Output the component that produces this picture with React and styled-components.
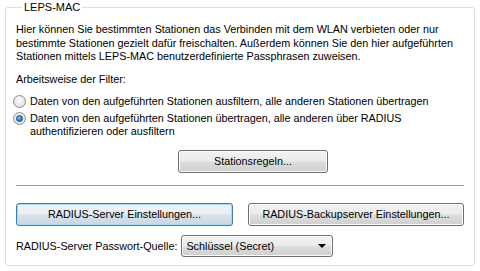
import React, { useState } from 'react';
import styled, { createGlobalStyle } from 'styled-components';

const GlobalStyle = createGlobalStyle`
  html, body {
    margin: 0;
    padding: 0;
    background: #ffffff;
  }
  body {
    font-family: "Liberation Sans", Arial, sans-serif;
    font-size: 10.8px;
    color: #000000;
  }
`;

const Page = styled.div`
  width: 480px;
  height: 271px;
  padding: 0 6px 0 5px;
  box-sizing: border-box;
  background: #ffffff;
`;

const GroupBox = styled.fieldset`
  margin: 0;
  padding: 0 10px 10px 10px;
  height: 266px;
  box-sizing: border-box;
  border: 1px solid #d5dfe5;
  border-radius: 3px;
`;

const Legend = styled.legend`
  margin-left: 6px;
  padding: 0 2px;
  font-size: 11px;
  line-height: 14px;
`;

const Intro = styled.p`
  margin: 9px 0 0 0;
  line-height: 13.5px;
`;

const Caption = styled.div`
  margin-top: 9px;
  line-height: 13px;
`;

const RadioList = styled.div`
  display: flex;
  flex-direction: column;
  gap: 4px;
  margin-top: 9px;
`;

const RadioRow = styled.label`
  display: flex;
  align-items: flex-start;
  gap: 4px;
  margin-left: -3px;
  line-height: 13px;
`;

const RadioDot = styled.span`
  flex: none;
  width: 11px;
  height: 11px;
  margin-top: 0;
  border-radius: 50%;
  border: 1px solid #8d8d8d;
  background: radial-gradient(circle at 50% 40%, #fbfbfb 0%, #e8e8e8 55%, #d4d4d4 100%);
  display: flex;
  align-items: center;
  justify-content: center;

  &::after {
    content: '';
    display: ${(p) => (p.checked ? 'block' : 'none')};
    width: 5px;
    height: 5px;
    border-radius: 50%;
    border: 1px solid #174c86;
    background: radial-gradient(circle at 40% 35%, #8ad0ff 0%, #2a86d6 50%, #0d4f9a 100%);
  }
`;

const RadioText = styled.span`
  display: block;
`;

const ButtonRow = styled.div`
  display: flex;
  justify-content: ${(p) => p.justify || 'flex-start'};
  gap: 15px;
  margin-top: ${(p) => p.top || 0}px;
  padding-left: ${(p) => p.indent || 0}px;
`;

const Button = styled.button`
  width: ${(p) => p.w}px;
  height: 23px;
  padding: 0;
  font-family: "Liberation Sans", Arial, sans-serif;
  font-size: 10.8px;
  color: #000000;
  border-radius: 3px;
  border: 1px solid ${(p) => (p.focused ? '#3c7fb1' : '#707070')};
  box-shadow: inset 0 0 0 1px ${(p) => (p.focused ? '#a7d9f5' : '#fbfbfb')};
  background: ${(p) =>
    p.focused
      ? 'linear-gradient(#f0f4f7 0%, #e8eef3 48%, #d6e1ea 52%, #cad7e2 100%)'
      : 'linear-gradient(#f2f2f2 0%, #ebebeb 48%, #dddddd 52%, #cfcfcf 100%)'};
`;

const Separator = styled.hr`
  margin: 12px 0 0 0;
  border: 0;
  border-top: 1px solid #a0a0a0;
  height: 0;
`;

const SourceRow = styled.div`
  display: flex;
  align-items: center;
  gap: 4px;
  margin-top: 9.5px;
`;

const Select = styled.div`
  width: 152px;
  height: 22px;
  box-sizing: border-box;
  display: flex;
  align-items: center;
  justify-content: space-between;
  padding: 0 6px 0 4px;
  border-radius: 3px;
  border: 1px solid #707070;
  box-shadow: inset 0 0 0 1px #fbfbfb;
  background: linear-gradient(#f2f2f2 0%, #ebebeb 48%, #dddddd 52%, #cfcfcf 100%);
`;

const Arrow = styled.span`
  width: 0;
  height: 0;
  border-left: 4px solid transparent;
  border-right: 4px solid transparent;
  border-top: 4px solid #000000;
`;

export default function App() {
  const [mode, setMode] = useState(1);
  const options = [
    ['Daten von den aufgeführten Stationen ausfiltern, alle anderen Stationen übertragen'],
    ['Daten von den aufgeführten Stationen übertragen, alle anderen über RADIUS', 'authentifizieren oder ausfiltern'],
  ];

  return (
    <Page>
      <GlobalStyle />
      <GroupBox>
        <Legend>LEPS-MAC</Legend>
        <Intro>
          Hier können Sie bestimmten Stationen das Verbinden mit dem WLAN verbieten oder nur
          <br />
          bestimmte Stationen gezielt dafür freischalten. Außerdem können Sie den hier aufgeführten
          <br />
          Stationen mittels LEPS-MAC benutzerdefinierte Passphrasen zuweisen.
        </Intro>
        <Caption>Arbeitsweise der Filter:</Caption>
        <RadioList>
          {options.map((lines, i) => (
            <RadioRow key={i} onClick={() => setMode(i)}>
              <RadioDot checked={mode === i} />
              <RadioText>
                {lines.map((l, j) => (
                  <div key={j}>{l}</div>
                ))}
              </RadioText>
            </RadioRow>
          ))}
        </RadioList>
        <ButtonRow top={12} indent={162}>
          <Button w={150}>Stationsregeln...</Button>
        </ButtonRow>
        <Separator />
        <ButtonRow top={17} justify="space-between">
          <Button w={217} focused>RADIUS-Server Einstellungen...</Button>
          <Button w={216}>RADIUS-Backupserver Einstellungen...</Button>
        </ButtonRow>
        <SourceRow>
          <span>RADIUS-Server Passwort-Quelle:</span>
          <Select>
            <span>Schlüssel (Secret)</span>
            <Arrow />
          </Select>
        </SourceRow>
      </GroupBox>
    </Page>
  );
}
